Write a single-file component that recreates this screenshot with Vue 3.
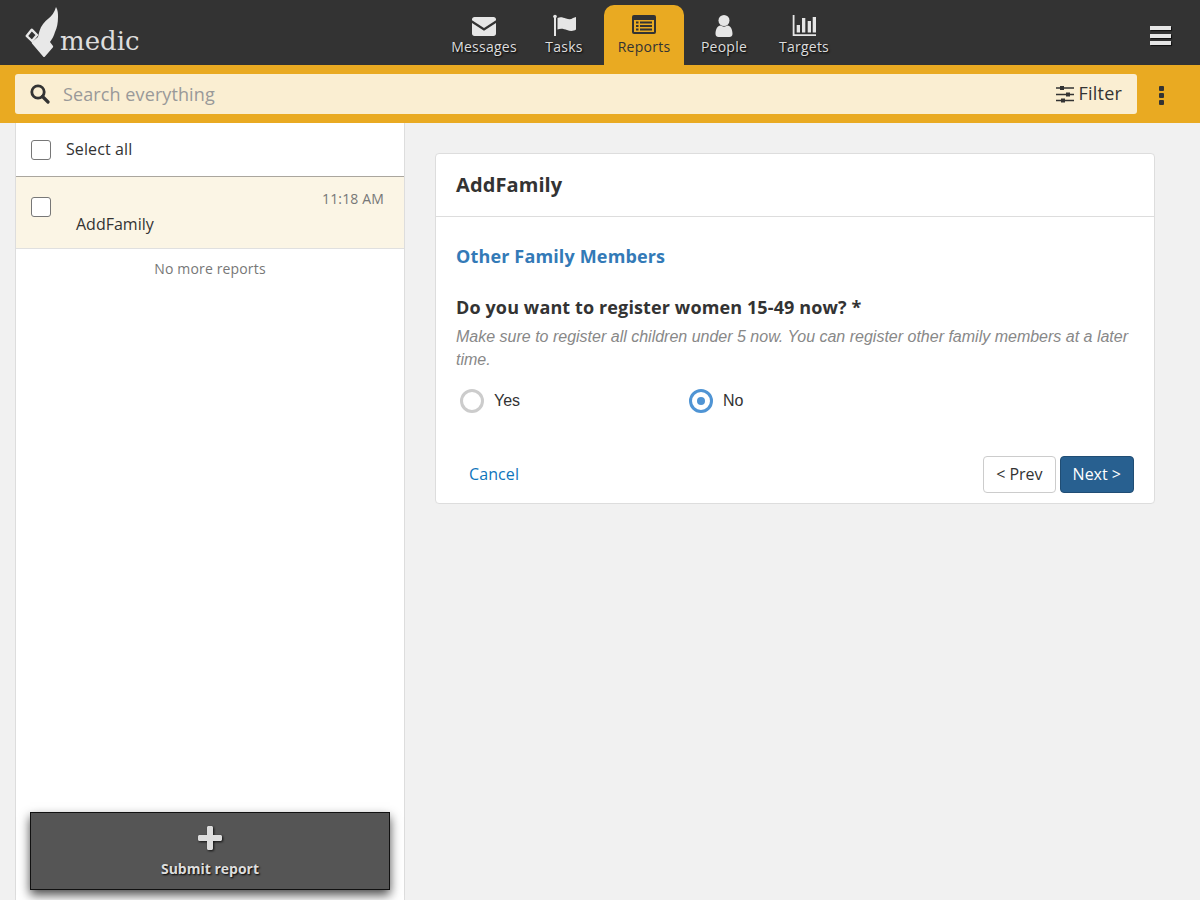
<script setup>
const tabs = [
  { id: 'messages', label: 'Messages' },
  { id: 'tasks', label: 'Tasks' },
  { id: 'reports', label: 'Reports', active: true },
  { id: 'people', label: 'People' },
  { id: 'targets', label: 'Targets' }
]
</script>

<template>
  <div class="page">
    <header class="header">
      <div class="logo">
        <svg class="logo-mark" width="40" height="54" viewBox="0 0 40 54">
          <path fill="#e8e8e8" d="M34 2c2 3 2 7 2 10 0 6-1 11-3 15-1 4-3 7-5 10l3 4c.3.500.2 1-.2 1.400L23 51.500c-.6.7-1.300.7-1.900 0L10 38.500c-.4-.5-.4-1 0-1.400l6-5.100c.5-2 .8-4 1.500-6 1.500-5 5-9.500 9-12.500 3-2.500 6-6 7.500-11.500z"/>
          <path fill="none" stroke="#e8e8e8" stroke-width="2.400" stroke-linejoin="round" d="M4.700 31l5-6.300 5.300 5.300-5 6z"/>
        </svg>
        <span class="logo-text">medic</span>
      </div>
      <nav class="tabs">
        <a v-for="tab in tabs" :key="tab.id" class="tab" :class="{ active: tab.active }">
          <svg class="tab-icon" width="28" height="24" viewBox="0 0 28 24">
            <g v-if="tab.id === 'messages'" fill="#e6e6e6">
              <path d="M2 5.500C2 4 3 3 4.500 3h19C25 3 26 4 26 5.500v.8L14 14 2 6.300z"/>
              <path d="M2 9l12 7.800L26 9v10.500c0 1.500-1 2.500-2.500 2.500h-19C3 22 2 21 2 19.500z"/>
            </g>
            <g v-else-if="tab.id === 'tasks'" fill="#e6e6e6">
              <rect x="4" y="2" width="2" height="20"/>
              <circle cx="5" cy="2.500" r="1.800"/>
              <path d="M7.500 4c3-1.500 5.500-.5 8.500.5s5 1 7-.5l3-1v12.500c-3 2-6 1.500-9 .5s-6-2-9.500-.5z"/>
            </g>
            <g v-else-if="tab.id === 'reports'">
              <rect x="2" y="1" width="24" height="19" rx="2" fill="#333"/>
              <rect x="4" y="6" width="20" height="12" fill="#e9aa22"/>
              <path fill="#333" d="M6 7.500h2.500v2H6zM10 7.500h12v2H10zM6 11h2.500v2H6zM10 11h12v2H10zM6 14.500h2.500v2H6zM10 14.500h12v2H10z"/>
            </g>
            <g v-else-if="tab.id === 'people'" fill="#e6e6e6">
              <circle cx="14" cy="6.500" r="5.500"/>
              <path d="M5.500 20c0-5 2-8 5-8.500 2 1.500 5 1.500 7 0 3 .5 5 3.500 5 8.500 0 2-1.500 3-3 3h-11c-1.500 0-3-1-3-3z"/>
            </g>
            <g v-else fill="#e6e6e6">
              <path d="M2.700 1h1.800v19.200H26V22H2.700z"/>
              <path d="M6.700 11H10v7.500H6.700zM12 4h3.300v14.500H12zM17.700 7H21v11.500h-3.300zM22.700 3H26v15.500h-3.300z"/>
            </g>
          </svg>
          <span class="tab-label">{{ tab.label }}</span>
        </a>
      </nav>
      <div class="hamburger"><span></span><span></span><span></span></div>
    </header>

    <div class="filter-bar">
      <div class="search">
        <svg class="search-icon" width="20" height="20" viewBox="0 0 20 20">
          <circle cx="8" cy="8" r="6.200" fill="none" stroke="#333" stroke-width="2.800"/>
          <path d="M12.500 12.500l5.500 5.500" stroke="#333" stroke-width="3.200" stroke-linecap="round"/>
        </svg>
        <span class="placeholder">Search everything</span>
        <span class="filter">
          <svg width="18" height="18" viewBox="0 0 18 18">
            <path stroke="#333" stroke-width="1.500" d="M0 3h18M0 9.500h18M0 15.500h18"/>
            <path fill="#333" d="M4 1h4v4H4zM10 7.500h4v4h-4zM5 13.500h4v4H5z"/>
          </svg>
          <span class="filter-label">Filter</span>
        </span>
      </div>
      <div class="more"><span></span><span></span><span></span></div>
    </div>

    <main class="content">
      <aside class="left-pane">
        <div class="select-all">
          <span class="checkbox"></span>
          <span class="select-label">Select all</span>
        </div>
        <div class="report-item">
          <span class="checkbox"></span>
          <div class="report-body">
            <div class="report-time">11:18 AM</div>
            <div class="report-name">AddFamily</div>
          </div>
        </div>
        <div class="no-more">No more reports</div>
        <button class="submit">
          <svg width="26" height="26" viewBox="0 0 26 26">
            <path fill="#ddd" d="M10 2.500c0-.8.7-1.500 1.500-1.500h3c.8 0 1.500.7 1.500 1.500V10h7.500c.8 0 1.500.7 1.500 1.500v3c0 .8-.7 1.500-1.500 1.500H16v7.500c0 .8-.7 1.500-1.500 1.500h-3c-.8 0-1.500-.7-1.500-1.500V16H2.500C1.700 16 1 15.300 1 14.500v-3c0-.8.700-1.500 1.500-1.500H10z"/>
          </svg>
          <span>Submit report</span>
        </button>
      </aside>

      <section class="right-pane">
        <div class="card">
          <h2 class="card-title">AddFamily</h2>
          <div class="card-body">
            <h3 class="section-title">Other Family Members</h3>
            <div class="question">Do you want to register women 15-49 now? *</div>
            <div class="hint">Make sure to register all children under 5 now. You can register other family members at a later time.</div>
            <div class="options">
              <label class="option"><span class="radio"></span>Yes</label>
              <label class="option"><span class="radio checked"></span>No</label>
            </div>
            <div class="actions">
              <a class="cancel">Cancel</a>
              <div class="nav-buttons">
                <button class="btn">&lt; Prev</button>
                <button class="btn primary">Next &gt;</button>
              </div>
            </div>
          </div>
        </div>
      </section>
    </main>
  </div>
</template>

<style>
html, body {
  margin: 0;
  height: 100%;
  overflow: hidden;
}
</style>

<style scoped>
.page {
  height: 900px;
  display: flex;
  flex-direction: column;
  background: #f1f1f1;
  font-family: "Open Sans", sans-serif;
  color: #333;
  overflow: hidden;
}

.header {
  height: 65px;
  flex: none;
  display: flex;
  background: #333;
}

.logo {
  width: 444px;
  flex: none;
  display: flex;
  align-items: flex-start;
  padding-left: 22px;
  box-sizing: border-box;
}

.logo-mark {
  margin-top: 5px;
}

.logo-text {
  margin: 23px 0 0 -2px;
  font-family: "DejaVu Serif", serif;
  font-weight: 300;
  font-size: 26px;
  line-height: 36px;
  color: #dedede;
}

.tabs {
  display: flex;
}

.tab {
  width: 80px;
  margin-top: 5px;
  display: flex;
  flex-direction: column;
  align-items: center;
  border-radius: 10px 10px 0 0;
  color: #ddd;
  text-shadow: 1px 1px 2px #000;
}

.tab.active {
  background: #e9aa22;
  color: #333;
  text-shadow: none;
}

.tab-icon {
  margin-top: 9px;
}

.tab-label {
  font-size: 14px;
  line-height: 19px;
  margin-top: -1px;
  letter-spacing: 0.25px;
}

.hamburger {
  margin: 26px 29px 0 auto;
  width: 21px;
  display: flex;
  flex-direction: column;
  gap: 3.500px;
}

.hamburger span {
  height: 4px;
  background: #e6e6e6;
  box-shadow: 1px 1px 1px #111;
}

.filter-bar {
  height: 58px;
  flex: none;
  display: flex;
  align-items: flex-start;
  background: #e9aa22;
}

.search {
  margin: 9px 0 0 15px;
  width: 1122px;
  height: 40px;
  box-sizing: border-box;
  padding: 0 15px;
  display: flex;
  align-items: center;
  background: #faeed2;
  border-radius: 3px;
}

.search-icon {
  margin-right: 13px;
}

.placeholder {
  font-size: 18px;
  letter-spacing: 0.1px;
  color: #999;
}

.filter {
  margin-left: auto;
  display: flex;
  align-items: center;
  gap: 5px;
  font-size: 18px;
  letter-spacing: 0.2px;
  color: #333;
}

.filter-label {
  padding-bottom: 2px;
}

.more {
  margin: 21px 0 0 22px;
  display: flex;
  flex-direction: column;
  gap: 2px;
}

.more span {
  width: 5px;
  height: 5px;
  border-radius: 1px;
  background: #333;
}

.content {
  flex: 1;
  display: flex;
  padding-left: 15px;
  min-height: 0;
}

.left-pane {
  position: relative;
  width: 390px;
  flex: none;
  box-sizing: border-box;
  background: #fff;
  border-left: 1px solid #ddd;
  border-right: 1px solid #ddd;
}

.checkbox {
  width: 18px;
  height: 18px;
  flex: none;
  border: 1px solid #777;
  border-radius: 3px;
  background: #fff;
}

.select-all {
  height: 53px;
  display: flex;
  align-items: center;
  gap: 15px;
  padding-left: 15px;
  font-size: 16px;
  border-bottom: 1px solid #aaa69e;
}

.select-label {
  padding-bottom: 2px;
  letter-spacing: 0.1px;
}

.report-item {
  height: 72px;
  display: flex;
  padding: 20px 20px 0 15px;
  box-sizing: border-box;
  background: #fbf5e5;
  border-bottom: 1px solid #e0e0e0;
}

.report-body {
  flex: 1;
  margin: -8px 0 0 25px;
}

.report-time {
  text-align: right;
  font-size: 14px;
  line-height: 20px;
  letter-spacing: 0.15px;
  color: #777;
}

.report-name {
  margin-top: 4px;
  font-size: 16px;
  line-height: 22px;
}

.no-more {
  margin-top: 10px;
  text-align: center;
  font-size: 14px;
  line-height: 20px;
  letter-spacing: 0.15px;
  color: #777;
}

.submit {
  position: absolute;
  left: 14px;
  bottom: 10px;
  width: 360px;
  height: 78px;
  box-sizing: border-box;
  padding: 12px 0 0;
  display: flex;
  flex-direction: column;
  align-items: center;
  background: #555;
  border: 1px solid #111;
  box-shadow: 0 5px 10px rgba(0, 0, 0, 0.7);
  color: #ddd;
  font-family: inherit;
  font-size: 14px;
  font-weight: 700;
  text-shadow: 1px 1px 2px #000;
}

.submit svg {
  filter: drop-shadow(1px 1px 1px #111);
}

.submit span {
  margin-top: 8px;
  line-height: 20px;
}

.right-pane {
  flex: 1;
  padding: 30px 45px 0 30px;
}

.card {
  background: #fff;
  border: 1px solid #ddd;
  border-radius: 4px;
}

.card-title {
  margin: 0;
  height: 63px;
  box-sizing: border-box;
  padding: 0 20px 2px;
  display: flex;
  align-items: center;
  font-size: 20px;
  font-weight: 700;
  letter-spacing: 0.1px;
  border-bottom: 1px solid #ddd;
}

.card-body {
  padding: 27px 20px 10px;
}

.section-title {
  margin: 0;
  font-size: 18px;
  line-height: 24px;
  font-weight: 700;
  letter-spacing: 0.15px;
  color: #337ab7;
}

.question {
  margin-top: 27px;
  font-size: 18px;
  line-height: 24px;
  font-weight: 700;
  letter-spacing: 0.12px;
}

.hint {
  margin-top: 6px;
  font-family: "Liberation Sans", sans-serif;
  font-size: 16px;
  line-height: 23px;
  font-style: italic;
  color: #888;
}

.options {
  margin-top: 6px;
  display: flex;
  padding-left: 4px;
}

.option {
  width: 229px;
  height: 48px;
  display: flex;
  align-items: center;
  gap: 10px;
  font-family: "Liberation Sans", sans-serif;
  font-size: 16px;
}

.radio {
  width: 24px;
  height: 24px;
  box-sizing: border-box;
  border: 3px solid #ccc;
  border-radius: 50%;
  position: relative;
}

.radio.checked {
  border-color: #4f94d4;
}

.radio.checked::after {
  content: "";
  position: absolute;
  left: 5px;
  top: 5px;
  width: 8px;
  height: 8px;
  border-radius: 50%;
  background: #4f94d4;
}

.actions {
  margin-top: 31px;
  display: flex;
  align-items: center;
  justify-content: space-between;
}

.cancel {
  padding: 0 0 2px 13px;
  font-size: 16px;
  letter-spacing: 0.1px;
  color: #0f75bc;
}

.nav-buttons {
  display: flex;
  gap: 4px;
}

.btn {
  height: 37px;
  padding: 0 12px 2px;
  background: #fff;
  border: 1px solid #ccc;
  border-radius: 4px;
  font-family: inherit;
  font-size: 16px;
  color: #333;
}

.btn.primary {
  background: #286090;
  border-color: #204d74;
  color: #fff;
}
</style>
